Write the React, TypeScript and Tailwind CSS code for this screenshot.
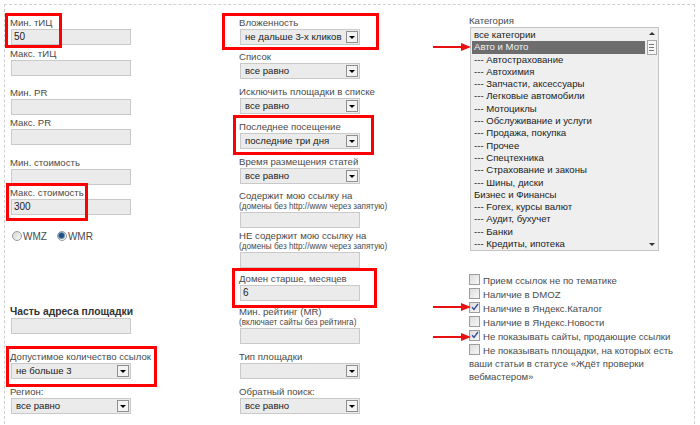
import React from 'react';

const categories = [
  'все категории',
  'Авто и Мото',
  '--- Автострахование',
  '--- Автохимия',
  '--- Запчасти, аксессуары',
  '--- Легковые автомобили',
  '--- Мотоциклы',
  '--- Обслуживание и услуги',
  '--- Продажа, покупка',
  '--- Прочее',
  '--- Спецтехника',
  '--- Страхование и законы',
  '--- Шины, диски',
  'Бизнес и Финансы',
  '--- Forex, курсы валют',
  '--- Аудит, бухучет',
  '--- Банки',
  '--- Кредиты, ипотека',
];

function TextInput({ value = '' }: { value?: string }) {
  return (
    <div className="ml-[1px] w-[120px] h-[16px] bg-[#ebebeb] border border-[#c9c9c9] pl-[2px] text-[#222] text-[10px] leading-[14px]">
      {value}
    </div>
  );
}

function Select({ value = '' }: { value?: string }) {
  return (
    <div className="ml-[1px] w-[120px] h-[16px] bg-[#ebebeb] border border-[#c9c9c9] flex items-center justify-between pl-[4px] pr-[1px] text-[#222] text-[9.6px]">
      <span className="leading-[14px] whitespace-nowrap">{value}</span>
      <span className="shrink-0 w-[12px] h-[12px] border border-[#8f8f8f] bg-[#f3f3f3] flex items-center justify-center">
        <span className="w-0 h-0 border-l-[3px] border-r-[3px] border-t-[3px] border-l-transparent border-r-transparent border-t-black" />
      </span>
    </div>
  );
}

function Field({ label, mt, note, children }: { label: string; mt: string; note?: string; children: React.ReactNode }) {
  return (
    <div className={mt}>
      <div className="leading-[13px] whitespace-nowrap">{label}</div>
      {note && <div className="text-[8.2px] leading-[10px] whitespace-nowrap">{note}</div>}
      {children}
    </div>
  );
}

function Checkbox({ checked = false }: { checked?: boolean }) {
  return (
    <span className="relative inline-block align-[-1px] w-[11px] h-[11px] mr-[3px] border border-[#9d9d9d] bg-gradient-to-br from-[#dcdcdc] to-[#f7f7f7]">
      {checked && (
        <svg className="absolute left-[1px] top-[0px]" width="8" height="8" viewBox="0 0 8 8">
          <path d="M1 4.2 L3 6.5 L7 1" fill="none" stroke="#2c4fa0" strokeWidth="1.3" />
        </svg>
      )}
    </span>
  );
}

function Radio({ checked = false }: { checked?: boolean }) {
  return (
    <span className="inline-flex items-center justify-center w-[10px] h-[10px] rounded-full border border-[#9a9a9a] bg-gradient-to-br from-[#d8d8d8] to-[#f8f8f8] mr-[1px] -translate-y-[1px]">
      {checked && <span className="w-[5px] h-[5px] rounded-full bg-[#1d4f87] ring-1 ring-[#6e8fb0]" />}
    </span>
  );
}

function RedArrow({ top }: { top: number }) {
  return (
    <svg className="absolute left-[432px]" style={{ top }} width="40" height="10" viewBox="0 0 40 10">
      <path d="M1 5 L31 5" stroke="#e81010" strokeWidth="2" />
      <path d="M29 1 L39 5 L29 9 Z" fill="#e81010" />
    </svg>
  );
}

export default function App() {
  return (
    <div className="relative w-[700px] h-[425px] overflow-hidden bg-white font-['Liberation_Sans',Arial,sans-serif] text-[9.6px] text-[#4a4a4a]">
      <div className="ml-[4px] mt-[4px] w-[691px] h-[440px] border border-dashed border-[#cfcfcf] flex">
        {/* column 1 */}
        <div className="w-[234px] pl-[5px]">
          <Field label="Мин. тИЦ" mt="mt-[11px]"><TextInput value="50" /></Field>
          <Field label="Макс. тИЦ" mt="mt-[2px]"><TextInput /></Field>
          <Field label="Мин. PR" mt="mt-[10px]"><TextInput /></Field>
          <Field label="Макс. PR" mt="mt-[1px]"><TextInput /></Field>
          <Field label="Мин. стоимость" mt="mt-[11px]"><TextInput /></Field>
          <Field label="Макс. стоимость" mt="mt-[1px]"><TextInput value="300" /></Field>
          <div className="mt-[15px] ml-[2px] leading-[13px] flex items-center text-[10px]">
            <Radio />
            <span>WMZ</span>
            <span className="ml-[10px] flex"><Radio checked /></span>
            <span>WMR</span>
          </div>
          <div className="mt-[62px] font-bold text-[10.3px] leading-[13px] text-[#333]">Часть адреса площадки</div>
          <TextInput />
          <Field label="Допустимое количество ссылок" mt="mt-[16px]"><Select value="не больше 3" /></Field>
          <Field label="Регион:" mt="mt-[6px]"><Select value="все равно" /></Field>
        </div>

        {/* column 2 */}
        <div className="w-[230px]">
          <Field label="Вложенность" mt="mt-[11px]"><Select value="не дальше 3-х кликов" /></Field>
          <Field label="Список" mt="mt-[5px]"><Select value="все равно" /></Field>
          <Field label="Исключить площадки в списке" mt="mt-[6px]"><Select value="все равно" /></Field>
          <Field label="Последнее посещение" mt="mt-[6px]"><Select value="последние три дня" /></Field>
          <Field label="Время размещения статей" mt="mt-[6px]"><Select value="все равно" /></Field>
          <Field label="Содержит мою ссылку на" note="(домены без http://www через запятую)" mt="mt-[5px]"><TextInput /></Field>
          <Field label="НЕ содержит мою ссылку на" note="(домены без http://www через запятую)" mt="mt-[1px]"><TextInput /></Field>
          <Field label="Домен старше, месяцев" mt="mt-[4px]"><TextInput value="6" /></Field>
          <Field label="Мин. рейтинг (MR)" note="(включает сайты без рейтинга)" mt="mt-[4px]"><TextInput /></Field>
          <Field label="Тип площадки" mt="mt-[6px]"><Select /></Field>
          <Field label="Обратный поиск:" mt="mt-[6px]"><Select value="все равно" /></Field>
        </div>

        {/* column 3 */}
        <div className="flex-1 pr-[8px]">
          <div className="mt-[9px] leading-[13px]">Категория</div>
          <div className="ml-[1px] w-[189px] h-[224px] border border-[#c4c4c4] bg-[#efefef] flex">
            <div className="flex-1 pl-[1px] pt-[1px] text-[#222]">
              {categories.map((c, i) => (
                <div
                  key={c}
                  className={
                    'h-[12.3px] leading-[12.3px] pl-[2px] whitespace-nowrap ' +
                    (i === 1 ? 'bg-[#6d6d6d] text-[#f2f2f2]' : '')
                  }
                >
                  {c}
                </div>
              ))}
            </div>
            <div className="w-[13px] flex flex-col items-center justify-between py-[4px]">
              <div className="flex flex-col items-center">
                <span className="w-0 h-0 border-l-[3px] border-r-[3px] border-b-[3px] border-l-transparent border-r-transparent border-b-[#333]" />
                <div className="mt-[5px] w-[10px] h-[15px] border border-[#a8a8a8] bg-[#f6f6f6] flex flex-col items-center justify-center gap-[2px]">
                  <span className="w-[5px] h-px bg-[#777]" />
                  <span className="w-[5px] h-px bg-[#777]" />
                  <span className="w-[5px] h-px bg-[#777]" />
                </div>
              </div>
              <span className="w-0 h-0 border-l-[3px] border-r-[3px] border-t-[3px] border-l-transparent border-r-transparent border-t-[#333]" />
            </div>
          </div>
          <div className="mt-[23px] leading-[13px]">
            <div className="mb-[1px]"><Checkbox />Прием ссылок не по тематике</div>
            <div className="mb-[1px]"><Checkbox />Наличие в DMOZ</div>
            <div className="mb-[1px]"><Checkbox checked />Наличие в Яндекс.Каталог</div>
            <div className="mb-[1px]"><Checkbox />Наличие в Яндекс.Новости</div>
            <div className="mb-[1px]"><Checkbox checked />Не показывать сайты, продающие ссылки</div>
            <div className="mb-[1px]">
              <Checkbox />Не показывать площадки, на которых есть ваши статьи в статусе «Ждёт проверки вебмастером»
            </div>
          </div>
        </div>
      </div>

      {/* annotations */}
      <div className="absolute left-[5px] top-[13px] w-[57px] h-[35px] border-[3px] border-[#f00]" />
      <div className="absolute left-[6px] top-[183px] w-[82px] h-[38px] border-[3px] border-[#f00]" />
      <div className="absolute left-[6px] top-[346px] w-[151px] h-[41px] border-[3px] border-[#f00]" />
      <div className="absolute left-[222px] top-[13px] w-[157px] h-[37px] border-[3px] border-[#f00]" />
      <div className="absolute left-[233px] top-[115px] w-[141px] h-[40px] border-[3px] border-[#f00]" />
      <div className="absolute left-[232px] top-[268px] w-[145px] h-[40px] border-[3px] border-[#f00]" />
      <RedArrow top={42} />
      <RedArrow top={302} />
      <RedArrow top={332} />
    </div>
  );
}
